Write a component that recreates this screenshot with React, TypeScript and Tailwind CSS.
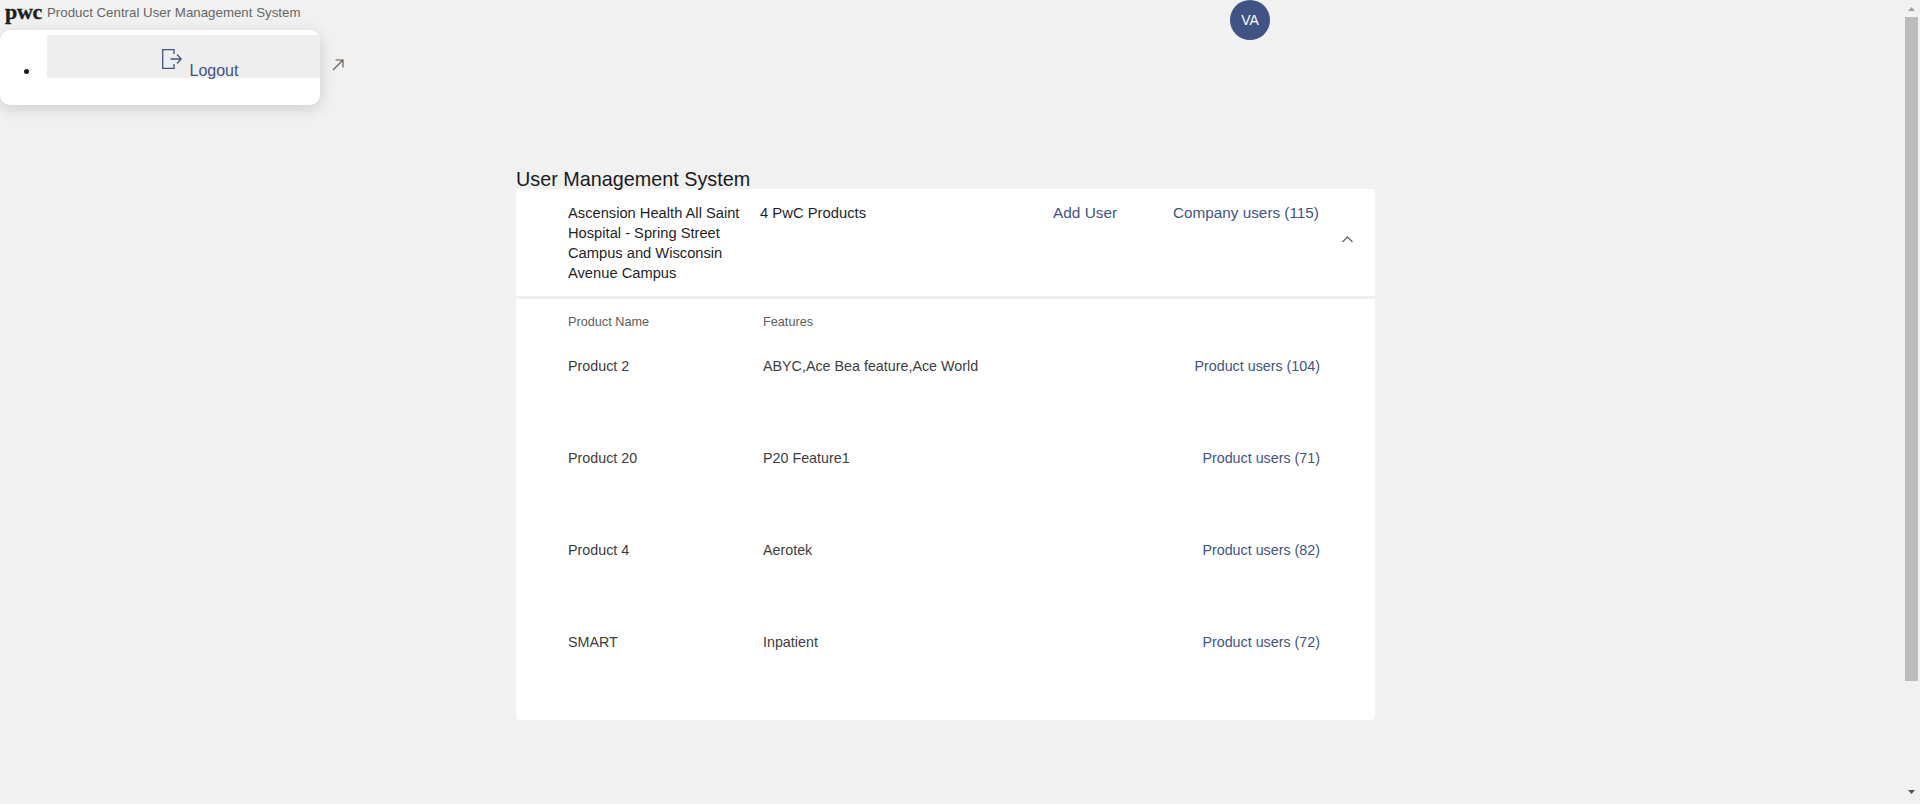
import React from "react";

const rows = [
  { name: "Product 2", features: "ABYC,Ace Bea feature,Ace World", users: "Product users (104)" },
  { name: "Product 20", features: "P20 Feature1", users: "Product users (71)" },
  { name: "Product 4", features: "Aerotek", users: "Product users (82)" },
  { name: "SMART", features: "Inpatient", users: "Product users (72)" },
];

export default function App() {
  return (
    <div className="flex h-[804px] overflow-hidden bg-[#f1f1f1] font-['Liberation_Sans',Arial,sans-serif]">
      <div className="relative flex-1 min-w-0">
        <header className="relative flex h-[40px] items-start">
          <div className="flex h-[25px] items-center pl-[5px]">
            <span className="w-[42px] shrink-0 font-['Liberation_Serif',serif] text-[22px] leading-[25px] font-bold tracking-[-0.3px] text-[#1f1f1f] -translate-y-[1px] [-webkit-text-stroke:0.4px_#1f1f1f]">pwc</span>
            <span className="text-[13.3px] text-[#666666]">Product Central User Management System</span>
          </div>
          <div className="absolute left-[1230px] top-0 flex h-[40px] w-[40px] items-center justify-center rounded-full bg-[#415385] text-[14px] text-white">VA</div>
        </header>

        <div className="absolute left-0 top-[30px] h-[75px] w-[320px] rounded-[10px] bg-white shadow-[0_4px_16px_rgba(0,0,0,0.15)]">
          <ul className="pl-[24px] pt-[5px]">
            <li className="flex">
              <span className="mt-[34px] h-[5px] w-[5px] rounded-full bg-[#1a1a1a]" />
              <div className="relative ml-[18px] h-[43px] w-[303px] bg-[#eeeeee] text-[#415385]">
                <svg className="absolute left-[115px] top-[14px]" width="20" height="20" viewBox="0 0 20 20" fill="none" stroke="#415385" strokeWidth="1.3">
                  <path d="M12 5V0.7H0.7v18.6H12V15" />
                  <path d="M8.5 10H19M15 5.5l4.2 4.5L15 14.5" />
                </svg>
                <span className="absolute left-[143px] top-[24px] text-[16px] leading-[24px]">Logout</span>
                <svg className="absolute left-[285px] top-[24px]" width="12" height="12" viewBox="0 0 12 12" fill="none" stroke="#6b5a4e" strokeWidth="1.2">
                  <path d="M1 11 11 1M3.5 1H11v7.5" />
                </svg>
              </div>
            </li>
          </ul>
        </div>

        <main className="ml-[516px] w-[859px] pt-[130px]">
          <h1 className="text-[19.8px] leading-[19px] text-[#1a1a1a]">User Management System</h1>
          <section className="h-[531px] rounded-[4px] bg-white">
            <div className="flex h-[107px] rounded-[4px] bg-white pl-[52px] pt-[14px] text-[15px] leading-[20px] text-[#1f1f1f]">
              <div className="w-[192px] pr-[8px] text-[14.7px]">Ascension Health All Saint Hospital - Spring Street Campus and Wisconsin Avenue Campus</div>
              <div className="w-[293px] text-[14.8px]">4 PwC Products</div>
              <div className="w-[120px] text-[15.4px] text-[#415385]">Add User</div>
              <div className="w-[146px] whitespace-nowrap text-[15.3px] text-[#415385]">Company users (115)</div>
              <svg className="ml-[23px] mt-[33px]" width="11" height="7" viewBox="0 0 11 7" fill="none" stroke="#6e6e6e" strokeWidth="1.5">
                <path d="M0.5 6 5.5 1l5 5" />
              </svg>
            </div>
            <div className="h-[3px] bg-[#f0f0f0]" />
            <div className="grid grid-cols-[195px_1fr] pl-[52px] pt-[13px] text-[12.7px] leading-[20px] text-[#5c5c5c]">
              <div>Product Name</div>
              <div>Features</div>
            </div>
            <div className="pt-[24px]">
              {rows.map((r) => (
                <div key={r.name} className="grid h-[92px] grid-cols-[195px_1fr_auto] pl-[52px] pr-[55px] text-[14.3px] leading-[20px] text-[#3d3d3d]">
                  <div>{r.name}</div>
                  <div>{r.features}</div>
                  <div className="text-[#415385]">{r.users}</div>
                </div>
              ))}
            </div>
          </section>
        </main>
      </div>

      <aside className="flex w-[17px] shrink-0 flex-col items-center bg-[#f1f1f1]">
        <svg className="mt-[7px]" width="7" height="4" viewBox="0 0 7 4"><path d="M3.5 0 7 4H0z" fill="#a0a0a0" /></svg>
        <div className="mt-[6px] h-[664px] w-[13px] bg-[#bcbcbc]" />
        <svg className="mt-[109px]" width="7" height="4" viewBox="0 0 7 4"><path d="M0 0h7L3.5 4z" fill="#505050" /></svg>
      </aside>
    </div>
  );
}
